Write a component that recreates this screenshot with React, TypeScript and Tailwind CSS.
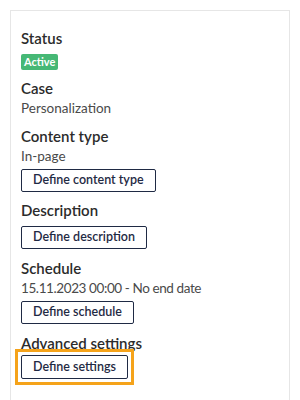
const label = "text-[15px] leading-5 font-semibold text-[#2b2b2b]";
const value = "text-[13.5px] leading-5 text-[#4a4a4a]";
const btn =
  "h-[23px] rounded-[2px] border border-[#1f2a44] px-[11px] text-[12.5px] font-semibold text-[#1f2a44]";

export default function App() {
  return (
    <div className="min-h-[400px] bg-white pl-[10px] pt-[10px] font-['Lato',sans-serif]">
      <div className="h-[420px] w-[280px] border border-[#e6e6e6] bg-white px-[10px] pt-[17px]">
        <h3 className={label}>Status</h3>
        <span className="mt-[2px] inline-flex h-4 items-center rounded-[2px] bg-[#46b875] px-[3px] text-[11px] font-bold text-white">
          Active
        </span>

        <h3 className={`mt-[6px] ${label}`}>Case</h3>
        <p className={value}>Personalization</p>

        <h3 className={`mt-2 ${label}`}>Content type</h3>
        <p className={value}>In-page</p>
        <button className={`mt-[2px] ${btn}`}>Define content type</button>

        <h3 className={`mt-[8px] ${label}`}>Description</h3>
        <button className={`mt-[6px] ${btn}`}>Define description</button>

        <h3 className={`mt-[9px] ${label}`}>Schedule</h3>
        <p className={`${value} tracking-[-0.4px]`}>15.11.2023 00:00 - No end date</p>
        <button className={`mt-[1px] ${btn}`}>Define schedule</button>

        <h3 className={`mt-[9px] ${label}`}>Advanced settings</h3>
        <button className={`relative mt-[2px] h-[24px] ${btn}`}>
          Define settings
          <span className="pointer-events-none absolute -inset-[7px] border-[3px] border-[#f5a31a]" />
        </button>
      </div>
    </div>
  );
}
